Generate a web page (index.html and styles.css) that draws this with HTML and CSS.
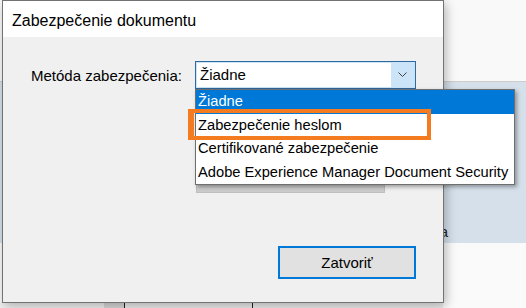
FILE: index.html
```html
<!DOCTYPE html>
<html lang="sk">
<head>
<meta charset="UTF-8">
<title>Zabezpečenie dokumentu</title>
<link rel="stylesheet" href="styles.css">
</head>
<body>
<div class="app">
    <div class="app-top"></div>
    <div class="app-band">
        <span class="band-text">Ochrana</span>
    </div>
    <div class="app-rest">
        <div class="app-strip">
            <span class="strip-cell strip-dark"></span>
            <span class="strip-cell strip-mid"></span>
            <span class="strip-cell strip-wide"></span>
        </div>
    </div>
</div>

<div class="dialog">
    <div class="dialog-title">Zabezpečenie dokumentu</div>
    <div class="dialog-body">
        <div class="form-row">
            <label class="field-label">Metóda zabezpečenia:</label>
            <div class="combo">
                <span class="combo-value">Žiadne</span>
                <span class="combo-arrow">
                    <svg width="9" height="6" viewBox="0 0 9 6"><path d="M0.5 0.5 L4.5 4.5 L8.5 0.5" fill="none" stroke="#404040" stroke-width="1"/></svg>
                </span>
                <ul class="combo-list">
                    <li class="selected">Žiadne</li>
                    <li>Zabezpečenie heslom</li>
                    <li>Certifikované zabezpečenie</li>
                    <li>Adobe Experience Manager Document Security</li>
                    <span class="callout"></span>
                </ul>
            </div>
        </div>
        <div class="form-row second">
            <button class="btn btn-disabled"></button>
        </div>
        <div class="dialog-actions">
            <button class="btn btn-primary">Zatvoriť</button>
        </div>
    </div>
</div>
</body>
</html>
```

FILE: styles.css
```css
    body {
        font-family: 'Liberation Sans', Arial, sans-serif;
        font-size: 15px;
        color: #000;
        margin: 0;
        width: 526px;
        height: 308px;
        overflow: hidden;
        position: relative;
        background-color: #f0f0f0;
    }

    .app {
        width: 526px;
        height: 308px;
        display: flex;
        flex-direction: column;
    }

    .app-top {
        height: 81px;
        background-color: #f9f9f9;
        border-bottom: 1px solid #cdcdcd;
    }

    .app-band {
        height: 161px;
        background-color: #d5e0ea;
        display: flex;
        align-items: flex-end;
    }

    .band-text {
        width: 448px;
        text-align: right;
        padding-bottom: 3px;
        color: #222;
    }

    .app-rest {
        flex: 1;
        background-color: #fafafa;
        display: flex;
        flex-direction: column;
        justify-content: flex-end;
    }

    .app-strip {
        height: 6px;
        width: 443px;
        display: flex;
        background-color: #ececec;
    }

    .strip-cell {
        display: block;
        height: 100%;
    }

    .strip-dark {
        width: 104px;
        background-color: #f0f0f0;
    }

    .strip-mid {
        width: 20px;
        background-color: #d8d8d8;
        border-right: 1px solid #222;
    }

    .strip-wide {
        width: 127px;
        border-right: 1px solid #222;
    }

    /* dialog window */
    .dialog {
        position: absolute;
        left: 2px;
        top: 0;
        width: 440px;
        height: 301px;
        border: 1px solid #737373;
        background-color: #f0f0f0;
        box-shadow: 2px 3px 10px rgba(0, 0, 0, 0.28);
        display: flex;
        flex-direction: column;
    }

    .dialog-title {
        height: 36px;
        box-sizing: border-box;
        background-color: #fff;
        padding: 9px 0 0 9px;
        font-size: 16px;
        line-height: 22px;
    }

    .dialog-body {
        flex: 1;
        display: flex;
        flex-direction: column;
        padding: 24px 26px 23px 28px;
    }

    .form-row {
        display: flex;
        align-items: center;
        height: 28px;
    }

    .form-row.second {
        margin-top: 76px;
        padding-left: 165px;
    }

    .field-label {
        width: 164px;
    }

    .combo {
        position: relative;
        width: 221px;
        height: 28px;
        box-sizing: border-box;
        border: 1px solid #2d6a9f;
        background-color: #cce4f7;
        padding: 1px;
        display: flex;
    }

    .combo-value {
        flex: 1;
        background-color: #fff;
        padding-left: 3px;
        line-height: 24px;
    }

    .combo-arrow {
        width: 23px;
        display: flex;
        align-items: center;
        justify-content: center;
    }

    .combo-list {
        position: absolute;
        top: 27px;
        left: -1px;
        width: 320px;
        box-sizing: border-box;
        margin: 0;
        padding: 0;
        list-style: none;
        background-color: #fff;
        border: 1px solid #6f6f6f;
        box-shadow: 2px 2px 4px rgba(0, 0, 0, 0.35);
        z-index: 10;
    }

    .combo-list li {
        height: 23.5px;
        line-height: 23.5px;
        padding-left: 2px;
        font-size: 14.7px;
        white-space: nowrap;
    }

    .combo-list li.selected {
        background-color: #0078d7;
        color: #fff;
    }

    .callout {
        position: absolute;
        left: -8px;
        top: 19px;
        width: 243px;
        height: 31px;
        box-sizing: border-box;
        border: 4px solid #f47b20;
        border-left-width: 6px;
    }

    .btn {
        font-family: inherit;
        font-size: 15px;
        box-sizing: border-box;
        padding: 0;
    }

    .btn-disabled {
        width: 189px;
        height: 28px;
        background-color: #cccccc;
        border: 1px solid #bfbfbf;
    }

    .dialog-actions {
        margin-top: auto;
        display: flex;
        justify-content: flex-end;
        margin-right: 1px;
    }

    .btn-primary {
        width: 138px;
        height: 33px;
        background-color: #e1e1e1;
        border: 2px solid #0078d7;
        color: #000;
    }
```
